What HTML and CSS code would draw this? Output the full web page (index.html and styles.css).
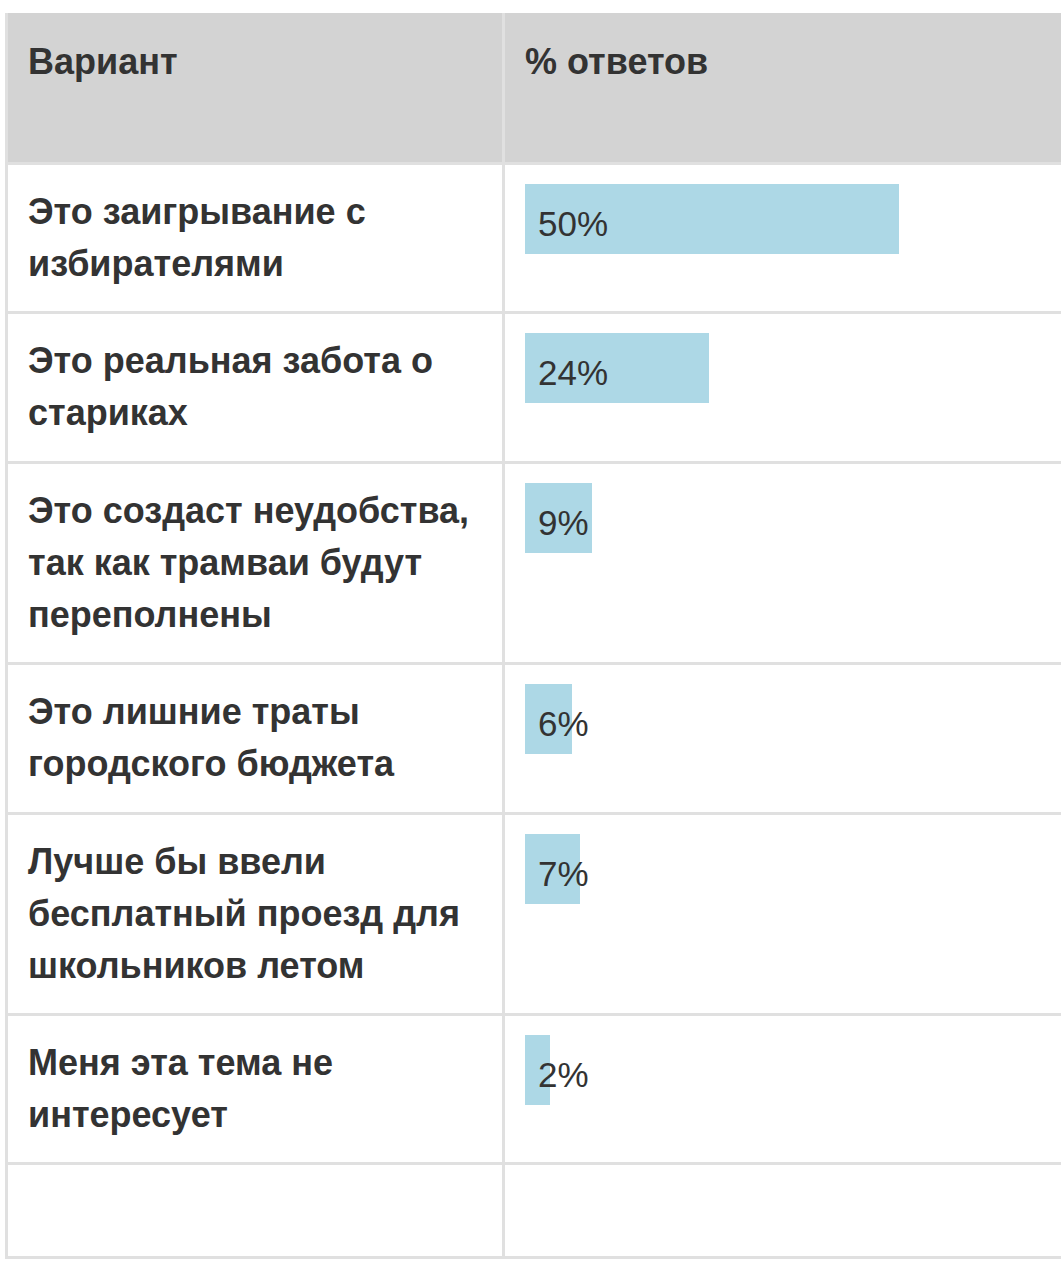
FILE: index.html
```html
<!DOCTYPE html>
<html lang="ru">
<head>
<meta charset="utf-8">
<title>Результаты опроса</title>
<link rel="stylesheet" href="styles.css">
</head>
<body>
<div class="wrap">
  <table class="poll">
    <thead>
      <tr>
        <th class="col-variant">Вариант</th>
        <th class="col-share">% ответов</th>
      </tr>
    </thead>
    <tbody>
      <tr>
        <td class="label">Это заигрывание с избирателями</td>
        <td class="share"><div class="bar" style="width: 50%">50%</div></td>
      </tr>
      <tr>
        <td class="label">Это реальная забота о стариках</td>
        <td class="share"><div class="bar" style="width: 24.6%">24%</div></td>
      </tr>
      <tr>
        <td class="label">Это создаст неудобства, так как трамваи будут переполнены</td>
        <td class="share"><div class="bar" style="width: 9%">9%</div></td>
      </tr>
      <tr>
        <td class="label">Это лишние траты городского бюджета</td>
        <td class="share"><div class="bar" style="width: 6.3%">6%</div></td>
      </tr>
      <tr>
        <td class="label">Лучше бы ввели бесплатный проезд для школьников летом</td>
        <td class="share"><div class="bar" style="width: 7.4%">7%</div></td>
      </tr>
      <tr>
        <td class="label">Меня эта тема не интересует</td>
        <td class="share"><div class="bar" style="width: 3.3%">2%</div></td>
      </tr>
      <tr class="blank">
        <td></td>
        <td></td>
      </tr>
    </tbody>
  </table>
</div>
</body>
</html>
```

FILE: styles.css
```css
html, body {
  margin: 0;
  padding: 0;
  background: #ffffff;
}

.wrap {
  width: 100%;
  overflow: hidden;
  padding: 13px 0 0 5px;
  box-sizing: border-box;
}

.poll {
  border-collapse: separate;
  border-spacing: 0;
  border-left: 3px solid #e0e0e0;
  table-layout: fixed;
  width: 1291px;
  font-family: "Liberation Sans", Arial, sans-serif;
  color: #333333;
}

.poll th,
.poll td {
  border-right: 3px solid #e0e0e0;
  border-bottom: 3px solid #e0e0e0;
  vertical-align: top;
  text-align: left;
}

.col-variant {
  width: 454px;
}

.col-share {
  width: 748px;
}

.poll th {
  background: #d3d3d3;
  font-size: 36px;
  font-weight: bold;
  line-height: 52px;
  padding: 23px 20px 74px 20px;
}

.label {
  font-size: 36px;
  font-weight: bold;
  line-height: 52px;
  padding: 21px 20px 21.4px 20px;
}

.share {
  padding: 19px 20px 0 20px;
}

.bar {
  box-sizing: border-box;
  height: 70px;
  background: #add8e6;
  padding: 10px 0 0 13px;
  font-size: 35px;
  line-height: 60px;
  white-space: nowrap;
  overflow: visible;
  color: #333333;
}

.blank td {
  height: 94px;
  padding: 0;
  box-sizing: border-box;
}
```
